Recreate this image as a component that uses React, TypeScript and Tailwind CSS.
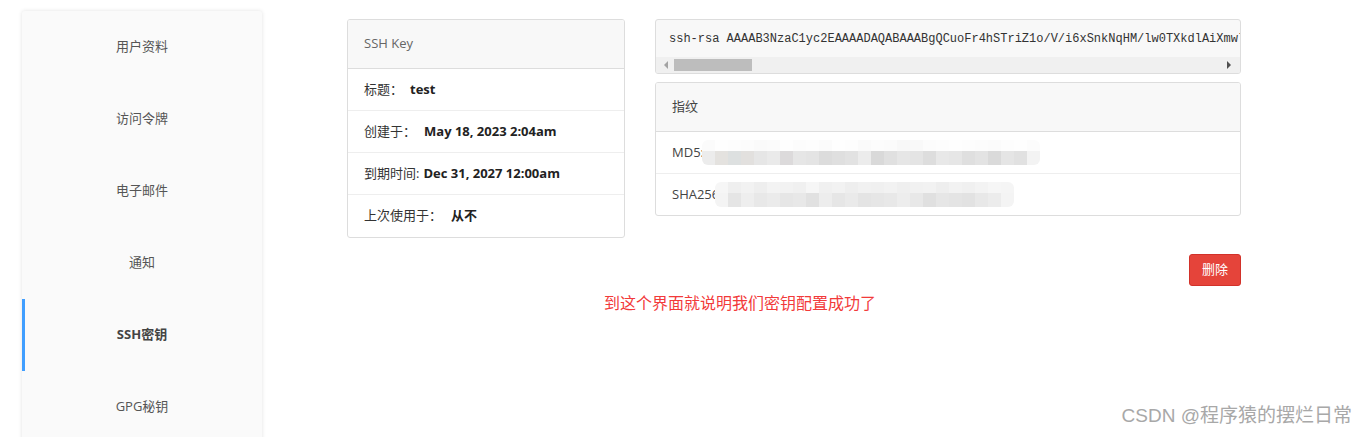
const navItems = ["用户资料", "访问令牌", "电子邮件", "通知", "SSH密钥", "GPG秘钥"];

const keyRows = [
  { label: "标题：", value: "test", gap: "ml-[7px]" },
  { label: "创建于：", value: "May 18, 2023 2:04am", gap: "ml-[8px]" },
  { label: "到期时间:", value: "Dec 31, 2027 12:00am", gap: "ml-[4px]" },
  { label: "上次使用于：", value: "从不", gap: "ml-[9px]" },
];

const md5Top = ["#fbfbfb", "#fefefe", "#fdfdfd", "#fcfcfc", "#fafafa", "#fbfbfb", "#fefefe", "#fcfcfc", "#fdfdfd", "#fbfbfb", "#fefefe", "#fdfdfd", "#fafafa", "#fcfcfc", "#fbfbfb", "#f8f8f8", "#f9f9f9", "#fcfcfc", "#fdfdfd", "#fefefe", "#fdfdfd", "#fcfcfc", "#fbfbfb", "#fdfdfd", "#fefefe", "#fcfcfc"];
const md5Bot = ["#ececec", "#e4e2df", "#dde0e0", "#e2e0de", "#e6e6e6", "#eaeaea", "#dcdadb", "#e6e6e6", "#e4e4e4", "#dcdcdc", "#dfdfdf", "#e2e2e2", "#ececec", "#d9d9d9", "#e0e0e0", "#e6e6e6", "#e4e4e4", "#dddddd", "#e8e8e8", "#e6e6e6", "#dfdfdf", "#e3e3e3", "#dadada", "#e5e5e5", "#e1e1e1", "#f3f3f3"];
const shaTop = ["#f6f6f6", "#efefef", "#f2f2f2", "#eeeeee", "#f3f3f3", "#f2f2f2", "#f0f0f0", "#f6f6f6", "#f0f0f0", "#f2f2f2", "#eeeeee", "#f1f1f1", "#f0f0f0", "#f2f2f2", "#efefef", "#f1f1f1", "#f2f2f2", "#eeeeee", "#f2f2f2", "#f0f0f0", "#f3f3f3", "#f6f6f6", "#f5f5f5"];
const shaBot = ["#f4f4f4", "#e5e5e5", "#eeeeee", "#e8e8e8", "#ebebeb", "#e6e6e6", "#e8e8e8", "#e1e1e1", "#ededed", "#e6e6e6", "#eaeaea", "#e4e4e4", "#e6e6e6", "#e8e8e8", "#ededed", "#e8e8e8", "#e0e0e0", "#e6e6e6", "#e4e4e4", "#e2e2e2", "#e8e8e8", "#ececec", "#f4f4f4"];

// pixelated "mosaic" covering the hashes
function Blur({ top, bot }: { top: string[]; bot: string[] }) {
  return (
    <div className="flex flex-col rounded-[6px] overflow-hidden">
      <div className="flex">
        {top.map((c, i) => (
          <div key={i} className="w-[13px] h-[11px]" style={{ background: c }} />
        ))}
      </div>
      <div className="flex">
        {bot.map((c, i) => (
          <div key={i} className="w-[13px] h-[14px]" style={{ background: c }} />
        ))}
      </div>
    </div>
  );
}

export default function App() {
  return (
    <div className="relative w-[1366px] h-[437px] bg-white overflow-hidden text-[13px] text-[#333]" style={{ fontFamily: '"Open Sans", "Noto Sans CJK SC", sans-serif' }}>
      <div className="flex items-start pl-[22px] pt-[11px]">
        {/* sidebar */}
        <div className="w-[240px] shrink-0 bg-[#fafafa] shadow-[0_0_4px_rgba(0,0,0,0.12)] rounded-[3px]">
          {navItems.map((item) => {
            const active = item === "SSH密钥";
            return (
              <div
                key={item}
                className={`h-[72px] flex items-center justify-center border-l-[3px] ${
                  active ? "border-[#409eff] font-bold text-[#444]" : "border-transparent text-[#555]"
                }`}
              >
                <span className="-ml-[3px]">{item}</span>
              </div>
            );
          })}
        </div>

        <div className="ml-[85px] pt-[8px] w-[894px]">
          <div className="flex items-start">
            {/* key info card */}
            <div className="w-[278px] shrink-0 border border-[#ddd] rounded-[3px] overflow-hidden">
              <div className="h-[49px] bg-[#f8f8f8] border-b border-[#ddd] flex items-center px-[16px] text-[#666]">SSH Key</div>
              {keyRows.map((r, i) => (
                <div key={r.label} className={`h-[42px] flex items-center px-[16px] ${i < keyRows.length - 1 ? "border-b border-[#eee]" : ""}`}>
                  <span className="text-[#333]">{r.label}</span>
                  <span className={`${r.gap} font-bold text-[#222]`}>{r.value}</span>
                </div>
              ))}
            </div>

            <div className="ml-[30px] flex-1 min-w-0 flex flex-col gap-[8px]">
              {/* public key */}
              <div className="border border-[#ddd] rounded-[3px] bg-[#f8f8f8] overflow-hidden">
                <div className="h-[37px] flex items-center pl-[13px] whitespace-nowrap overflow-hidden text-[12px] text-[#333]" style={{ fontFamily: '"Liberation Mono", monospace' }}>
                  ssh-rsa AAAAB3NzaC1yc2EAAAADAQABAAABgQCuoFr4hSTriZ1o/V/i6xSnkNqHM/lw0TXkdlAiXmwl
                </div>
                <div className="h-[16px] bg-[#f0f0f0] flex items-center px-[4px]">
                  <svg width="6" height="8" viewBox="0 0 6 8" className="ml-[3px]"><path d="M5 0 L1 4 L5 8 Z" fill="#a3a3a3" /></svg>
                  <div className="ml-[5px] w-[78px] h-[12px] bg-[#bdbdbd]" />
                  <div className="flex-1" />
                  <svg width="6" height="8" viewBox="0 0 6 8" className="mr-[4px]"><path d="M1 0 L5 4 L1 8 Z" fill="#505050" /></svg>
                </div>
              </div>

              {/* fingerprint */}
              <div className="border border-[#ddd] rounded-[3px] overflow-hidden">
                <div className="h-[49px] bg-[#f8f8f8] border-b border-[#ddd] flex items-center px-[16px] text-[#444]">指纹</div>
                <div className="h-[42px] flex items-center pl-[16px] border-b border-[#eee] text-[#444]">
                  <span>MD5:</span>
                  <div className="-ml-[2px]"><Blur top={md5Top} bot={md5Bot} /></div>
                </div>
                <div className="h-[41px] flex items-center pl-[16px] text-[#444]">
                  <span>SHA256</span>
                  <div className="-ml-[4px]"><Blur top={shaTop} bot={shaBot} /></div>
                </div>
              </div>
            </div>
          </div>

          <div className="flex justify-end mt-[16px]">
            <button className="w-[52px] h-[32px] bg-[#e5443a] border border-[#d2322a] rounded-[3px] text-white text-[13px]">删除</button>
          </div>
          <div className="ml-[257px] mt-[5px] text-[16px] text-[#f23a3a]">到这个界面就说明我们密钥配置成功了</div>
        </div>
      </div>

      <div className="absolute right-[14px] bottom-[7px] text-[19px] text-[#a8a8a8]" style={{ fontFamily: 'Arial, "Liberation Sans", "Noto Sans CJK SC", sans-serif' }}>
        CSDN @程序猿的摆烂日常
      </div>
    </div>
  );
}
